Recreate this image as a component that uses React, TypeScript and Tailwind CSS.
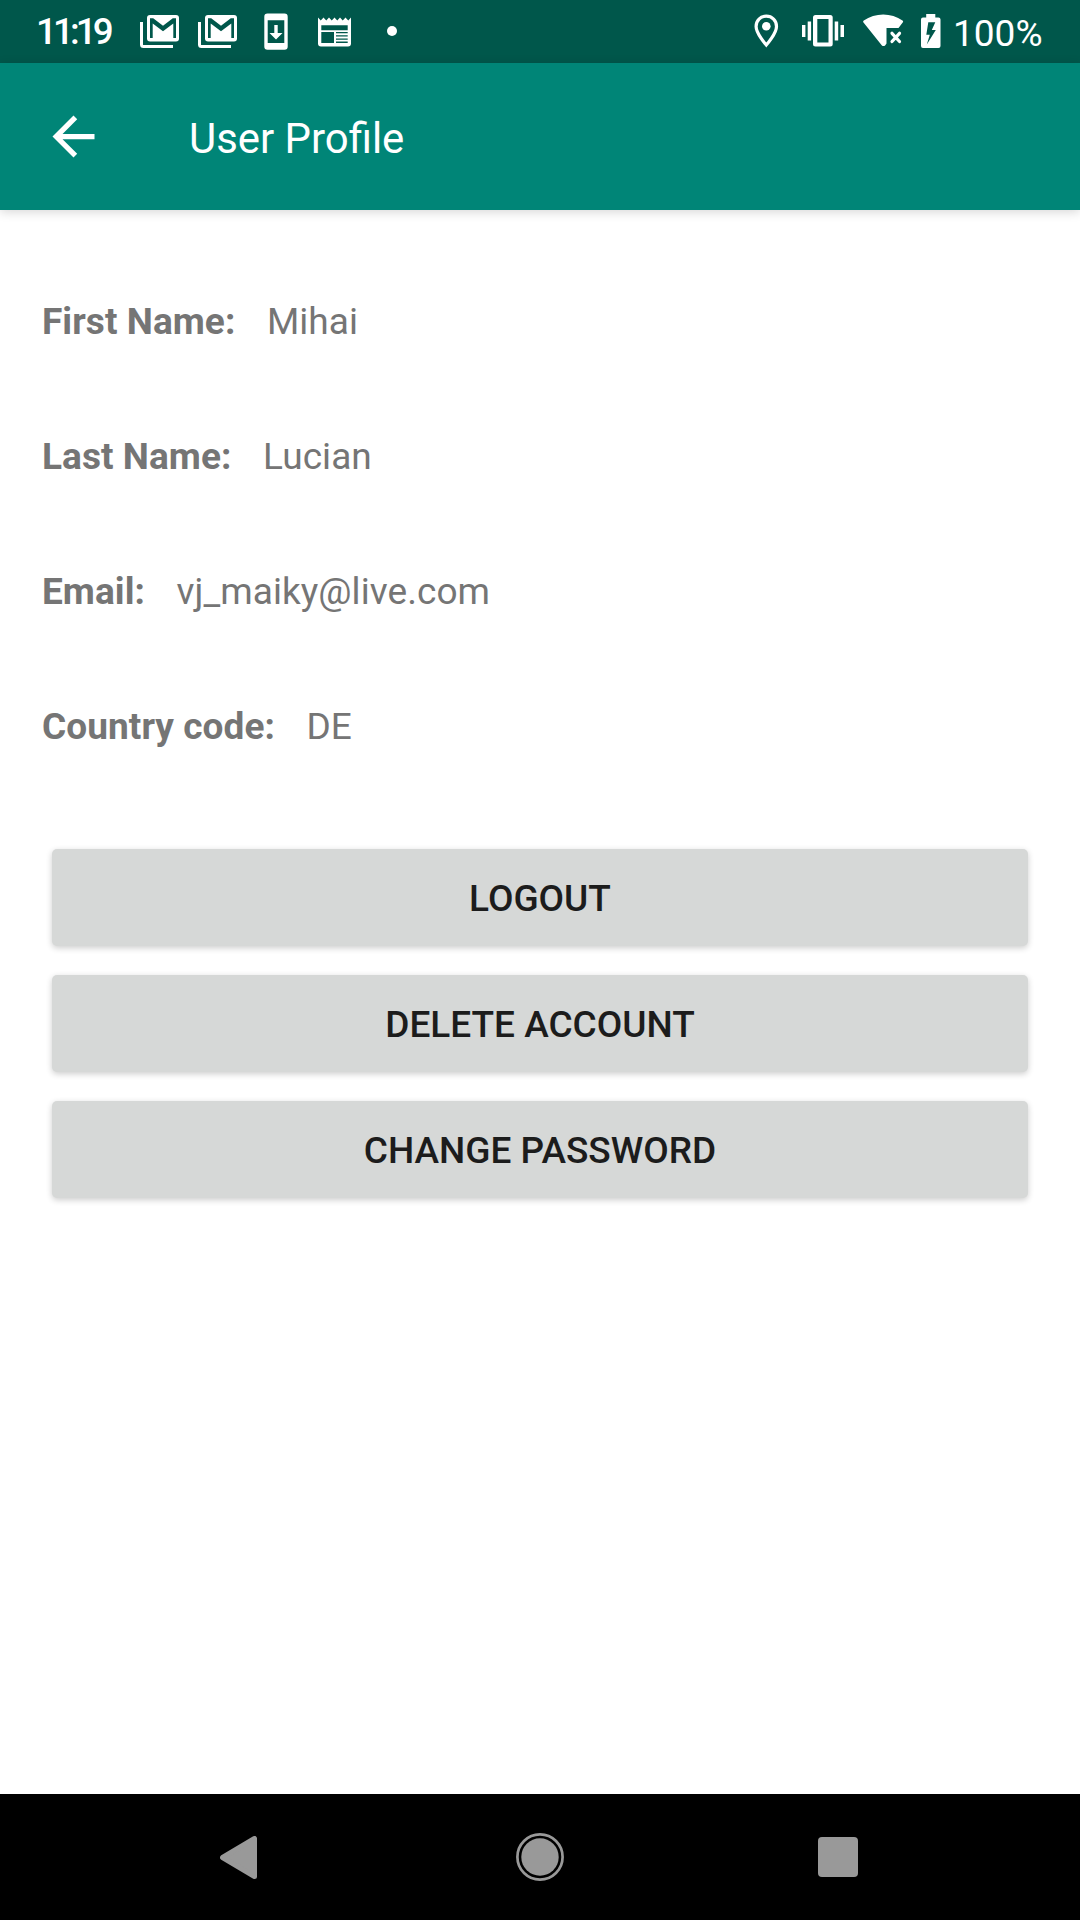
import type { ReactNode } from "react";

const GmailIcon = () => (
  <svg width="39" height="33" viewBox="0 0 39 33" className="shrink-0">
    <path d="M1.5 7V29.5Q1.5 31.5 3.5 31.5H33" fill="none" stroke="#fff" strokeWidth="3" />
    <rect x="7" y="0" width="32" height="26.5" rx="3" fill="#fff" />
    <path d="M10 23V3.3H13.2L23 10.8L32.8 3.3H36V23H33.3V8.5L23 16.3L12.7 8.5V23Z" fill="#00574b" />
  </svg>
);

const PhoneDownloadIcon = () => (
  <svg width="24" height="37" viewBox="0 0 24 37" className="shrink-0">
    <path
      fill="#fff"
      fillRule="evenodd"
      d="M3.5 .5H20.5Q23.7 .5 23.7 3.7V33.5Q23.7 36.7 20.5 36.7H3.5Q.3 36.7 .3 33.5V3.7Q.3 .5 3.5 .5ZM3.7 7.2V30H20.3V7.2Z"
    />
    <path fill="#fff" d="M10.3 12H13.7V20H18.5L12 26.5L5.5 20H10.3Z" />
  </svg>
);

const NewsIcon = () => (
  <svg width="33" height="30" viewBox="0 0 33 30" className="shrink-0">
    <path
      fill="#fff"
      fillRule="evenodd"
      d="M0 .5L2.75 3.5L5.5 .5L8.25 3.5L11 .5L13.75 3.5L16.5 .5L19.25 3.5L22 .5L24.75 3.5L27.5 .5L30.25 3.5L33 .5V26.5Q33 29.5 30 29.5H3Q0 29.5 0 26.5ZM3.3 8.3V13.3H29.7V8.3ZM3.3 15V26H16V15ZM18 15V16.3H29.7V15ZM18 18.200V19.500H29.7V18.200ZM18 21.400V22.700H29.7V21.400ZM18 24.600V26H29.7V24.600Z"
    />
  </svg>
);

const LocationIcon = () => (
  <svg width="25" height="34" viewBox="0 0 25 34" className="shrink-0">
    <path
      d="M12.3 2.2C6.500 2.2 2.100 6.700 2.100 12.400C2.100 19.500 12.300 31 12.300 31S22.500 19.500 22.500 12.400C22.500 6.700 18.100 2.200 12.300 2.200Z"
      fill="none"
      stroke="#fff"
      strokeWidth="3.2"
    />
    <circle cx="12.3" cy="12.2" r="4.3" fill="#fff" />
  </svg>
);

const VibrateIcon = () => (
  <svg width="42" height="32" viewBox="0 0 42 32" className="shrink-0" fill="#fff">
    <path fillRule="evenodd" d="M13.500 0H28.200Q30.700 0 30.700 2.500V29Q30.700 31.500 28.200 31.500H13.500Q11 31.500 11 29V2.500Q11 0 13.500 0ZM15.300 4V27.500H26.500V4Z" />
    <path d="M0 10H3.400V22H0ZM5.700 6.400H9.100V25.600H5.700ZM32.700 6.400H36.200V25.600H32.700ZM38.500 10H42V22H38.500Z" />
  </svg>
);

const WifiOffIcon = () => (
  <svg width="41" height="33" viewBox="0 0 41 33" className="shrink-0">
    <path
      fill="#fff"
      d="M.3 8.300Q-.2 7.300 .8 6.600C12 -1.500 28.500 -1.500 39.500 6.600Q40.500 7.300 39.900 8.300L35.500 14H23.500V29.500L22.300 31.200Q20.500 33 18.700 31.200Z"
    />
    <path d="M29 19.300L36.500 27.500M36.500 19.300L29 27.500" stroke="#fff" strokeWidth="3.2" strokeLinecap="round" />
  </svg>
);

const BatteryIcon = () => (
  <svg width="20" height="34" viewBox="0 0 20 34" className="shrink-0">
    <path
      fill="#fff"
      fillRule="evenodd"
      d="M5.200 0H14.300V3.500H17.500Q19.500 3.500 19.500 5.500V32Q19.500 34 17.500 34H2Q0 34 0 32V5.500Q0 3.500 2 3.500H5.200ZM7.300 8.300L5.300 20.800H8.800L5.800 30.500L14.800 16H10.800L14.300 8.300Z"
    />
  </svg>
);

const StatusBar = () => (
  <div className="flex h-[63px] items-start bg-[#00574b] text-white">
    <div className="ml-[36px] mt-[10px] w-[104px] text-[36.75px] font-medium leading-[43px] tracking-[-3.9px]">11:19</div>
    <div className="mt-[15px]"><GmailIcon /></div>
    <div className="ml-[19px] mt-[15px]"><GmailIcon /></div>
    <div className="ml-[27px] mt-[13px]"><PhoneDownloadIcon /></div>
    <div className="ml-[30px] mt-[17px]"><NewsIcon /></div>
    <div className="ml-[36px] mt-[26px] size-[10px] rounded-full bg-white" />
    <div className="ml-auto mt-[14px]"><LocationIcon /></div>
    <div className="ml-[23px] mt-[15px]"><VibrateIcon /></div>
    <div className="ml-[19px] mt-[14px]"><WifiOffIcon /></div>
    <div className="ml-[17px] mt-[14px]"><BatteryIcon /></div>
    <div className="ml-[12px] mr-[37px] mt-[12px] w-[90px] whitespace-nowrap text-[37px] leading-[43px]">100%</div>
  </div>
);

const AppBar = () => (
  <header className="relative flex h-[147px] items-center bg-[#008577] pl-[42px] text-white shadow-[0_2px_10px_rgba(0,0,0,0.16)]">
    <svg width="63" height="63" viewBox="0 0 24 24" fill="#fff">
      <path d="M20 11H7.830l5.590-5.590L12 4l-8 8 8 8 1.410-1.410L7.830 13H20v-2z" />
    </svg>
    <h1 className="ml-[84px] mt-[3px] text-[41.9px] leading-[49px]">User Profile</h1>
  </header>
);

const Field = ({ label, value }: { label: string; value: string }) => (
  <div className="flex h-[135px] items-center gap-[31.5px] text-[37px] leading-[43px] text-[#757575]">
    <span className="font-bold tracking-[0.06px]">{label}</span>
    <span className="tracking-[0.06px]">{value}</span>
  </div>
);

const ActionButton = ({ children }: { children: ReactNode }) => (
  <button className="h-[97px] w-full rounded-[5px] bg-[#d6d8d7] pt-[2px] text-[37px] font-medium leading-[43px] text-[#1c1c1c] shadow-[0_2px_6px_rgba(0,0,0,0.2)]">
    {children}
  </button>
);

const NavBar = () => (
  <nav className="flex h-[126px] items-center bg-black">
    <svg width="38" height="43" viewBox="0 0 38 43" className="ml-[220px]">
      <path d="M2.500 21.500L34.500 2.500V40.500Z" fill="#999" stroke="#999" strokeWidth="5" strokeLinejoin="round" />
    </svg>
    <svg width="48" height="48" viewBox="0 0 48 48" className="ml-[258px]">
      <circle cx="24" cy="24" r="22.6" fill="none" stroke="#999" strokeWidth="2.700" />
      <circle cx="24" cy="24" r="18.700" fill="#999" />
    </svg>
    <div className="ml-[254px] size-[40px] rounded-[4px] bg-[#999]" />
  </nav>
);

export default function App() {
  return (
    <div className="flex h-[1920px] w-[1080px] flex-col overflow-hidden bg-white font-['Roboto',sans-serif]">
      <StatusBar />
      <AppBar />
      <main className="flex-1 pt-[44px]">
        <div className="px-[42px]">
          <Field label="First Name:" value="Mihai" />
          <Field label="Last Name:" value="Lucian" />
          <Field label="Email:" value="vj_maiky@live.com" />
          <Field label="Country code:" value="DE" />
        </div>
        <div className="flex flex-col gap-[29px] px-[52px] pt-[55px]">
          <ActionButton>LOGOUT</ActionButton>
          <ActionButton>DELETE ACCOUNT</ActionButton>
          <ActionButton>CHANGE PASSWORD</ActionButton>
        </div>
      </main>
      <NavBar />
    </div>
  );
}
